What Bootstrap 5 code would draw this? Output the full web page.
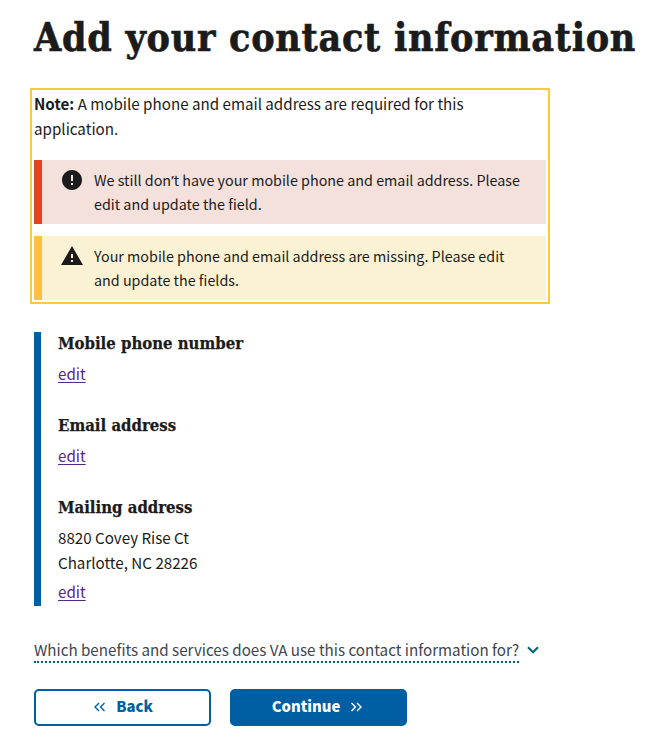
<!DOCTYPE html>
<html lang="en">
<head>
<meta charset="utf-8">
<meta name="viewport" content="width=device-width, initial-scale=1">
<title>Add your contact information</title>
<link href="https://cdn.jsdelivr.net/npm/bootstrap@5.3.0/dist/css/bootstrap.min.css" rel="stylesheet">
<style>
  body { font-family: "Noto Sans CJK SC", "Source Sans Pro", sans-serif; font-size: 15.16px; line-height: 25px; color: #1b1b1b; background: #fff; }
  .page { padding: 0 30px; }
  h1, h2 { font-family: "DejaVu Serif Condensed", "DejaVu Serif", serif; font-stretch: condensed; font-weight: 700; white-space: nowrap; }
  .page-title { font-size: 39px; line-height: 44px; letter-spacing: .73px; padding: 15px 4px 0; margin: 0 0 29px; -webkit-text-stroke: .6px #1b1b1b; }
  .notice { width: 520px; height: 216px; border: 2px solid #ffcb35; padding: 1px 2px 2px; }
  .notice-text { height: 69px; }
  .notice-item { height: 64px; border-left: 8px solid #de4520; background: #f5e1dc; padding: 8px 0 0 18px; font-size: 14.34px; line-height: 24px; white-space: nowrap; }
  .notice-item + .notice-item { border-color: #ffbe46; background: #fbf2d4; margin-top: 12px; }
  .notice-item svg { width: 24px; height: 24px; margin-right: 10px; flex: none; }
  .apos { font-family: "Noto Sans", sans-serif; line-height: 1; }
  .summary { border-left: 7px solid #005ea2; height: 274px; margin: 28px 0 0 4px; padding-left: 17px; }
  .summary h2 { font-size: 16.6px; line-height: 22px; margin: 0 0 7px; -webkit-text-stroke: .25px #1b1b1b; }
  .summary a { color: #54278f; text-underline-offset: 2px; }
  .entry { height: 82px; }
  .more { margin: 31px 0 0 4px; color: #3d4551; }
  .more-label { border-bottom: 2px dotted #00687d; height: 26px; line-height: 25px; white-space: nowrap; }
  .actions { margin: 26px 0 0 4px; gap: 19px; }
  .actions .btn { width: 177px; height: 37px; border: 2px solid #005ea2; border-radius: 5px; color: #005ea2; font-weight: 900; font-size: 14.8px; line-height: 24px; padding: 0 0 2px 2px; gap: 11px; }
  .actions .btn span { margin-top: -1px; }
  .actions .btn-go { background: #005ea2; color: #fff; padding: 0 3px 2px 0; }
</style>
<script src="https://cdn.jsdelivr.net/npm/bootstrap@5.3.0/dist/js/bootstrap.bundle.min.js"></script>
</head>
<body>
<main class="page">
  <h1 class="page-title">Add your contact information</h1>
  <section class="notice">
    <p class="notice-text m-0"><strong>Note:</strong> A mobile phone and email address are required for this<br>application.</p>
    <div class="notice-item d-flex align-items-start">
      <svg viewBox="0 0 24 24" fill="#1b1b1b"><path d="M12 2C6.480 2 2 6.480 2 12s4.480 10 10 10 10-4.480 10-10S17.520 2 12 2zm1 15h-2v-2h2v2zm0-4h-2V7h2v6z"/></svg>
      <div>We still don<span class="apos">’</span>t have your mobile phone and email address. Please<br>edit and update the field.</div>
    </div>
    <div class="notice-item d-flex align-items-start">
      <svg viewBox="0 0 24 24" fill="#1b1b1b"><path d="M1 21h22L12 2 1 21zm12-3h-2v-2h2v2zm0-4h-2v-4h2v4z"/></svg>
      <div>Your mobile phone and email address are missing. Please edit<br>and update the fields.</div>
    </div>
  </section>
  <section class="summary">
    <div class="entry"><h2>Mobile phone number</h2><a class="d-inline-block" href="#">edit</a></div>
    <div class="entry"><h2>Email address</h2><a class="d-inline-block" href="#">edit</a></div>
    <div><h2>Mailing address</h2><div>8820 Covey Rise Ct<br>Charlotte, NC 28226</div><a class="d-inline-block mt-1" href="#">edit</a></div>
  </section>
  <div class="more d-flex align-items-center">
    <span class="more-label">Which benefits and services does VA use this contact information for?</span>
    <svg class="ms-2" width="12" height="8" viewBox="0 0 12 8" fill="none" stroke="#00687d" stroke-width="2.200"><path d="M1 1.200l5 5 5-5"/></svg>
  </div>
  <div class="actions d-flex">
    <button class="btn d-flex align-items-center justify-content-center" type="button"><svg width="11" height="10" viewBox="0 0 11 10" fill="none" stroke="currentColor" stroke-width="1.400"><path d="M5 1L1 5l4 4M10.500 1l-4 4 4 4"/></svg><span>Back</span></button>
    <button class="btn btn-go d-flex align-items-center justify-content-center" type="button"><span>Continue</span><svg width="11" height="10" viewBox="0 0 11 10" fill="none" stroke="currentColor" stroke-width="1.400"><path d="M.5 1l4 4-4 4M6 1l4 4-4 4"/></svg></button>
  </div>
</main>
</body>
</html>
